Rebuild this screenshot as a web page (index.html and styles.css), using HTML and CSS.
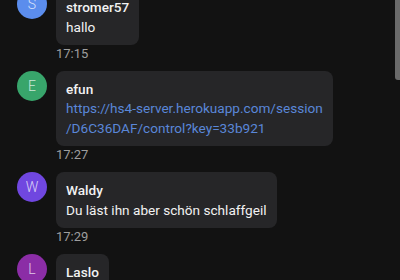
FILE: index.html
```html
<!DOCTYPE html>
<html lang="de">
<head>
    <meta charset="UTF-8">
    <meta name="viewport" content="width=device-width, initial-scale=1.0">
    <title>Chat</title>
    <link rel="stylesheet" href="styles.css">
</head>
<body>
    <div class="chat">
        <div class="message">
            <div class="avatar avatar-blue">S</div>
            <div class="body">
                <div class="bubble">
                    <div class="name">stromer57</div>
                    <div class="text">hallo</div>
                </div>
                <div class="time">17:15</div>
            </div>
        </div>

        <div class="message">
            <div class="avatar avatar-green">E</div>
            <div class="body">
                <div class="bubble">
                    <div class="name">efun</div>
                    <a class="link" href="#">https://hs4-server.herokuapp.com/session<br>/D6C36DAF/control?key=33b921</a>
                </div>
                <div class="time">17:27</div>
            </div>
        </div>

        <div class="message">
            <div class="avatar avatar-violet">W</div>
            <div class="body">
                <div class="bubble">
                    <div class="name">Waldy</div>
                    <div class="text">Du läst ihn aber schön schlaffgeil</div>
                </div>
                <div class="time">17:29</div>
            </div>
        </div>

        <div class="message">
            <div class="avatar avatar-purple">L</div>
            <div class="body">
                <div class="bubble">
                    <div class="name">Laslo</div>
                    <div class="text">&nbsp;</div>
                </div>
            </div>
        </div>
    </div>
    <div class="scrollbar"></div>
</body>
</html>
```

FILE: styles.css
```css
body {
    font-family: 'Roboto', 'Liberation Sans', sans-serif;
    background-color: #121212;
    color: #f2f2f2;
    margin: 0;
    overflow: hidden;
}
.chat {
    display: flex;
    flex-direction: column;
    gap: 9px;
    margin-top: -11px;
    padding-left: 17px;
}
.message {
    display: flex;
    align-items: flex-start;
    gap: 9px;
}
.avatar {
    width: 30px;
    height: 30px;
    border-radius: 50%;
    flex-shrink: 0;
    display: flex;
    align-items: center;
    justify-content: center;
    font-size: 14px;
    font-weight: 300;
    color: rgba(255, 255, 255, 0.75);
}
.avatar-blue { background: #5b8ded; }
.avatar-green { background: #38a56b; }
.avatar-violet { background: #7047e0; }
.avatar-purple { background: #8b2da6; }
.body {
    display: flex;
    flex-direction: column;
    align-items: flex-start;
}
.bubble {
    background: #262628;
    border-radius: 8px;
    padding: 8px 10px;
    font-size: 13.6px;
    line-height: 20px;
}
.name {
    font-weight: 500;
}
.link {
    color: #5a87d8;
    text-decoration: none;
    display: block;
    line-height: 19.5px;
}
.time {
    font-size: 13px;
    line-height: 16px;
    color: #9e9e9e;
    margin-top: 1px;
}
.scrollbar {
    position: absolute;
    top: 0;
    right: 0;
    width: 5px;
    height: 80px;
    background: #6a6a6a;
    border-bottom-left-radius: 3px;
}
```
